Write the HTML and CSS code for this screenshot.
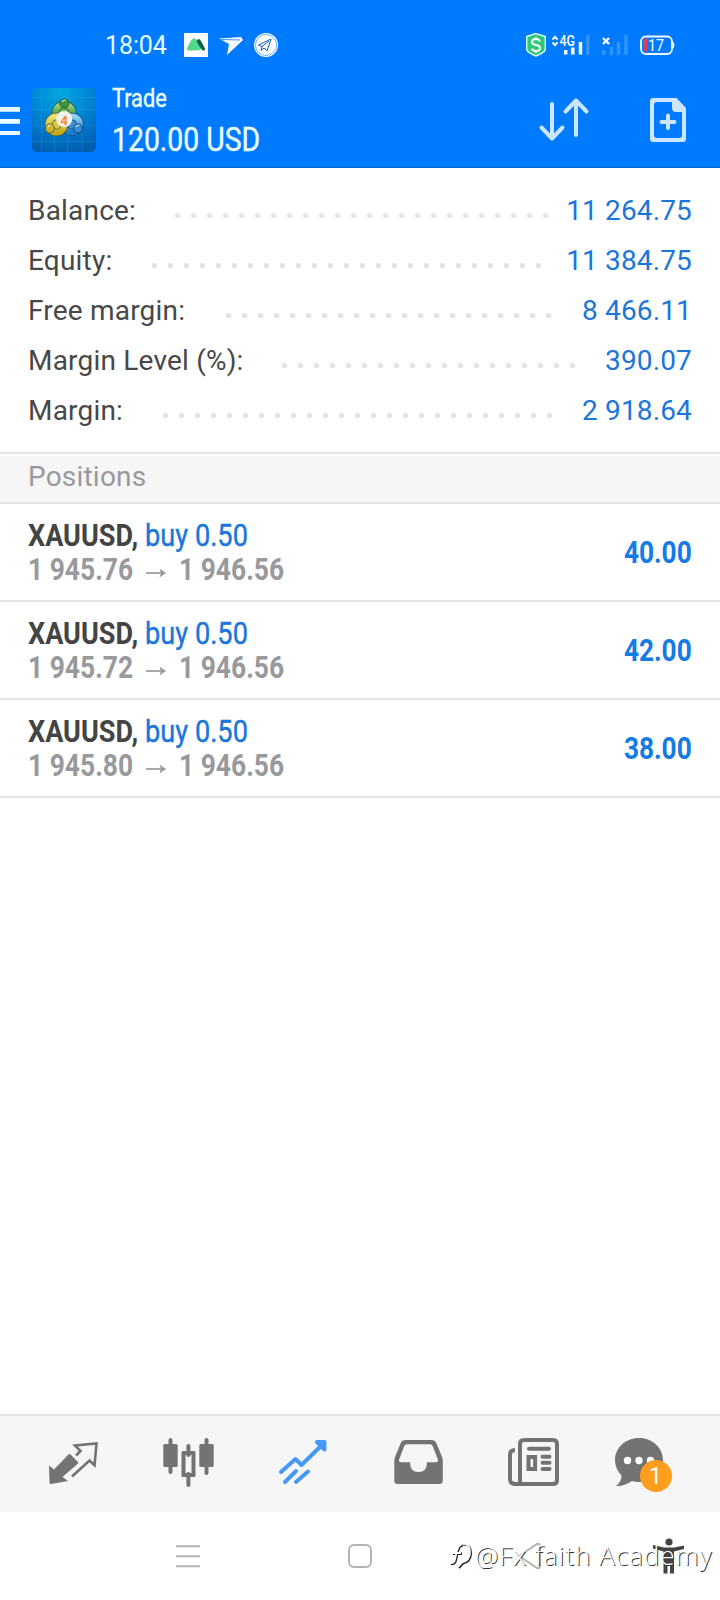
FILE: index.html
```html
<!DOCTYPE html>
<html lang="en">
<head>
<meta charset="utf-8">
<title>Trade</title>
<link rel="stylesheet" href="styles.css">
</head>
<body>
<div class="screen">
  <header class="top">
    <div class="status">
      <span class="clock">18:04</span>
      <svg class="status-apps" width="100" height="30" viewBox="180 30 100 30">
        <rect x="184" y="33" width="24" height="24" fill="#fff"/>
        <path d="M187 49q0-1.500 3.500-7.500t5.500-2l5 6v4q-2 1-7 1h-5q-2 0-2-1.500z" fill="#52d98b"/>
        <path d="M196.500 41q2-4 4.500 0l4 7.500q.5 2-2.500 2l-3-4z" fill="#12614d"/>
        <path d="M219 38.500l22-1.500 2 3-16 15 2-11z" fill="#fff"/>
        <path d="M221 39.500l19 .5" stroke="#007aff" stroke-width=".8"/>
        <circle cx="266" cy="45" r="12" fill="#fff"/>
        <circle cx="266" cy="45" r="10.500" fill="none" stroke="#007aff" stroke-width=".6"/>
        <path d="M271 39l-12.500 6 3.500 1.500-1 4 3-2.500 3 3zM262 46.500l7-5.500" fill="none" stroke="#1463b8" stroke-width="1" stroke-linejoin="round"/>
      </svg>
      <svg class="status-system" width="154" height="30" viewBox="522 30 154 30">
        <path d="M536 33.600l9.300 3v13.200q-1 3-9.300 6.200-8.300-3.200-9.300-6.200V36.600z" fill="#2fc877" stroke="#d9fff0" stroke-width="1.400"/>
        <path d="M540 41.500q-1-2.500-4-2.500-4 0-4 3 0 2.500 4 3t4 3q0 3-4 3-3.500 0-4-2.500M536 37v2M536 51v2" fill="none" stroke="#fff" stroke-width="2"/>
        <path d="M552.500 39.500l2.500-2.500 2.500 2.500M552.500 42.500l2.500 2.500 2.500-2.500" fill="none" stroke="#fff" stroke-width="2"/>
        <text x="559.500" y="46" class="net" textLength="15.500" lengthAdjust="spacingAndGlyphs">4G</text>
        <path d="M565.700 50v4.500M572.800 47.500v7M580.500 42v12.500" stroke="#fff" stroke-width="3.400"/>
        <path d="M587.800 35v20M603.700 50v5M611.500 47v8M618.500 42v13M626 35v20" stroke="#3296ff" stroke-width="3.400"/>
        <path d="M603 38l6 6M609 38l-6 6" stroke="#fff" stroke-width="2.400"/>
        <rect x="641" y="36.500" width="31" height="17.500" rx="5" fill="none" stroke="#f2fbff" stroke-width="1.800"/>
        <path d="M673 42q2 3 0 6z" fill="#fff" stroke="#fff"/>
        <path d="M647.500 38.500v13h-2q-2.500 0-2.500-3v-7q0-3 2.500-3z" fill="#e13c50"/>
        <text x="648" y="50.700" class="batt" textLength="16" lengthAdjust="spacingAndGlyphs">17</text>
      </svg>
    </div>
    <div class="bar">
      <svg class="menu" width="20" height="30" viewBox="0 105 20 30"><path d="M0 109.300h20M0 121.300h20M0 133.400h20" stroke="#eaffff" stroke-width="4.800"/></svg>
      <svg class="logo" width="64" height="64" viewBox="0 0 64 64">
        <defs>
          <radialGradient id="sky" cx=".45" cy=".05" r="1"><stop offset="0" stop-color="#00a6e2"/><stop offset=".5" stop-color="#0083d2"/><stop offset="1" stop-color="#005caf"/></radialGradient>
          <linearGradient id="gr" x2="0" y2="1"><stop offset="0" stop-color="#9fd07c"/><stop offset=".6" stop-color="#4d9d3a"/><stop offset="1" stop-color="#358335"/></linearGradient>
          <linearGradient id="ye" x2="0" y2="1"><stop offset="0" stop-color="#ece070"/><stop offset="1" stop-color="#c7a91d"/></linearGradient>
          <linearGradient id="bl" x2="0" y2="1"><stop offset="0" stop-color="#8fd0f5"/><stop offset="1" stop-color="#1b78c7"/></linearGradient>
        </defs>
        <rect width="64" height="64" rx="5" fill="url(#sky)"/>
        <path d="M9.500 0v64M22.500 0v64M35.500 0v64M50 0v64M0 9.500h64M0 21.500h64M0 38h64M0 53.500h64" stroke="#4cb7ed" stroke-opacity=".2" stroke-width="1"/>
        <circle cx="32" cy="25" r="8.500" fill="#6fb356" stroke="#245e3a" stroke-width="7.600"/>
        <circle cx="32" cy="25" r="8.500" fill="none" stroke="url(#gr)" stroke-width="6"/>
        <circle cx="40" cy="36.500" r="8" fill="#3b92d4" stroke="#0d4784" stroke-width="7.600"/>
        <circle cx="40" cy="36.500" r="8" fill="none" stroke="url(#bl)" stroke-width="6"/>
        <circle cx="24.500" cy="36.500" r="8" fill="#d9c840" stroke="#625d24" stroke-width="7.600"/>
        <circle cx="24.500" cy="36.500" r="8" fill="none" stroke="url(#ye)" stroke-width="6"/>
        <circle cx="32.300" cy="15.500" r="4.500" fill="#3f9438" stroke="#275f36"/>
        <circle cx="18" cy="40.500" r="4.500" fill="#cdb427" stroke="#665f22"/>
        <circle cx="46" cy="40.500" r="4.500" fill="#2f8dd3" stroke="#0d4784"/>
        <path d="M30 14q1.500-2.500 4-1.500M15.500 39q1.500-2.500 4-1.500M43.500 39q1.500-2.500 4-1.500" stroke="#fff" stroke-opacity=".6" stroke-width="1.500" fill="none"/>
        <circle cx="32.200" cy="31" r="8" fill="#f3f1eb"/>
        <text x="32" y="36.500" class="four">4</text>
      </svg>
      <div class="title">
        <span class="name">Trade</span>
        <span class="profit">120.00 USD</span>
      </div>
      <svg class="sort" width="52" height="46" viewBox="538 97 52 46"><path d="M552 104v34M541.500 127.500L552 138.500l10.500-11M576 135v-34M565.500 111.500L576 100.500l10.500 11" fill="none" stroke="#cce6ff" stroke-width="4" stroke-linecap="round" stroke-linejoin="round"/></svg>
      <svg class="add" width="38" height="46" viewBox="649 97 38 46"><path d="M653 98h23.500l9.500 10v31q0 3-3 3h-30q-3 0-3-3v-38q0-3 3-3zm4 4q-3 0-3 3v30q0 3 3 3h22q3 0 3-3v-23h-6q-4 0-4-4v-6z" fill="#cce6ff" fill-rule="evenodd"/><path d="M668 115.500v12.500M661.500 122h13" stroke="#cce6ff" stroke-width="4" stroke-linecap="round"/></svg>
    </div>
  </header>

  <section class="account">
    <div class="row balance"><span class="label">Balance:</span><i class="dots"></i><span class="value">11 264.75</span></div>
    <div class="row equity"><span class="label">Equity:</span><i class="dots"></i><span class="value">11 384.75</span></div>
    <div class="row free"><span class="label">Free margin:</span><i class="dots"></i><span class="value">8 466.11</span></div>
    <div class="row level"><span class="label">Margin Level (%):</span><i class="dots"></i><span class="value">390.07</span></div>
    <div class="row margin"><span class="label">Margin:</span><i class="dots"></i><span class="value">2 918.64</span></div>
  </section>

  <h2 class="section">Positions</h2>
  <main class="positions">
    <article class="position">
      <div class="info"><div class="line deal"><b class="symbol">XAUUSD,</b><span class="side">buy 0.50</span></div>
      <div class="line prices"><span class="price">1 945.76</span><svg class="arrow" width="20" height="12" viewBox="0 0 20 12"><path d="M0 6h18" stroke="#98999c" stroke-width="1.700"/><path d="M13.500 1.500L20 6l-6.500 4.500 1.500-4.500z" fill="#98999c"/></svg><span class="price">1 946.56</span></div></div>
      <span class="result">40.00</span>
    </article>
    <article class="position">
      <div class="info"><div class="line deal"><b class="symbol">XAUUSD,</b><span class="side">buy 0.50</span></div>
      <div class="line prices"><span class="price">1 945.72</span><svg class="arrow" width="20" height="12" viewBox="0 0 20 12"><path d="M0 6h18" stroke="#98999c" stroke-width="1.700"/><path d="M13.500 1.500L20 6l-6.500 4.500 1.500-4.500z" fill="#98999c"/></svg><span class="price">1 946.56</span></div></div>
      <span class="result">42.00</span>
    </article>
    <article class="position">
      <div class="info"><div class="line deal"><b class="symbol">XAUUSD,</b><span class="side">buy 0.50</span></div>
      <div class="line prices"><span class="price">1 945.80</span><svg class="arrow" width="20" height="12" viewBox="0 0 20 12"><path d="M0 6h18" stroke="#98999c" stroke-width="1.700"/><path d="M13.500 1.500L20 6l-6.500 4.500 1.500-4.500z" fill="#98999c"/></svg><span class="price">1 946.56</span></div></div>
      <span class="result">38.00</span>
    </article>
  </main>

  <nav class="tabs">
    <svg width="56" height="56" viewBox="45 1434 56 56"><path d="M49 1465.500l5 4 14.700-15.200q.8-.7 1.600 0l7.700 7.700q.8.800 0 1.600L62.500 1477l5.500 4-17 3q-1.500 0-1.500-1.500z" fill="#737373"/><path d="M76 1455.500l4.500-4.500-5.500-5.500 21.500-2-2 21.800-5-4.800-17.500 16" fill="none" stroke="#737373" stroke-width="2.600"/></svg>
    <svg width="56" height="56" viewBox="160 1434 56 56" fill="#737373"><path d="M170.500 1440v32M206.500 1440v33M188.400 1446v9M188.400 1474v11" stroke="#737373" stroke-width="4" stroke-linecap="round"/><rect x="163.300" y="1444" width="14.400" height="23" rx="1.500"/><rect x="199.300" y="1444" width="14.400" height="23" rx="1.500"/><path fill-rule="evenodd" d="M183 1451h11q1.500 0 1.500 1.500v23q0 1.500-1.500 1.500h-11q-1.500 0-1.500-1.500v-23q0-1.500 1.500-1.500zm2.500 4v18h6v-18z"/></svg>
    <svg width="56" height="56" viewBox="275 1434 56 56" fill="none" stroke="#4599f3" stroke-width="4" stroke-linecap="round" stroke-linejoin="round"><path d="M281 1472l14.500-13 6 6 22-21.500M285 1482l11-11M296 1482l12-10.500"/><path d="M317 1442h7.500v7.500z" fill="#4599f3"/></svg>
    <svg width="56" height="56" viewBox="390 1434 56 56"><path fill-rule="evenodd" d="M405 1440h27q3 0 4 2.500l5.500 13q1.300 3 1.300 6v19q0 3.500-3.500 3.500h-41.500q-3.500 0-3.500-3.500v-19q0-3 1.300-6l5.400-13q1-2.500 4-2.500zm2 4.200q-2 0-2.800 2l-5 13q-.8 3 1.800 3h9q0 9.800 8.500 9.800t8.500-9.800h9q2.600 0 1.800-3l-5-13q-.8-2-2.800-2z" fill="#737373"/></svg>
    <svg width="56" height="56" viewBox="505 1434 56 56" fill="none" stroke="#737373" stroke-width="4"><path d="M515 1450q-5 0-5 5v24q0 5 5 5h38q4 0 4-4v-36q0-4-4-4h-29q-4 0-4 4v40" /><path d="M529 1448.800h20M542.500 1456.700h7M542.500 1462.800h7M542.500 1469h7" stroke-linecap="round"/><rect x="528.500" y="1457" width="6.600" height="12"/></svg>
    <svg class="chat" width="60" height="60" viewBox="613 1434 60 60"><path d="M639 1438c13.500 0 24 9.800 24 22s-10.500 22-24 22q-4 0-7-1-8 5.500-16 5 5.500-4 5.500-10.500Q615 1469 615 1460c0-12.200 10.500-22 24-22z" fill="#737373"/><path d="M627.500 1460.500h.01M639 1460.500h.01M650.500 1460.500h.01" stroke="#fff" stroke-width="7.400" stroke-linecap="round"/><circle cx="656" cy="1476" r="16" fill="#ff9d1c"/><text x="655.500" y="1484" class="badge">1</text></svg>
  </nav>

  <footer class="system">
    <svg width="24" height="24" viewBox="0 0 24 24"><path d="M0 2.300h24M0 12.300h24M0 22.300h24" stroke="#b3b3b3" stroke-width="2"/></svg>
    <svg class="home" width="24" height="24" viewBox="0 0 24 24"><rect x="1" y="1" width="22" height="22" rx="5" fill="none" stroke="#b3b3b3" stroke-width="2"/></svg>
    <svg class="back" width="24" height="28" viewBox="0 0 24 28"><path d="M18 2q3-1 3 2v20q0 3-3 2L3 16q-3-2 0-4z" fill="none" stroke="#b3b3b3" stroke-width="2"/></svg>
    <svg class="access" width="32" height="36" viewBox="652 1538 32 36" fill="#444"><circle cx="669" cy="1542" r="3.600"/><path d="M653 1545l11 2.500h10l10-2v3.500l-10 2.500v22h-4v-10h-2.500v10h-4v-22l-10.500-3z"/></svg>
    <div class="watermark">
      <svg width="26" height="30" viewBox="448 1543 26 30" fill="none"><path d="M451 1567c5 1 5-3 6.500-11 1-5 3-7.500 6-8M453 1557h9M464 1547.500c5 0 7 4 7 9 0 6-4 9-8 10l-4 4.500M461 1556.500h1" stroke="#222" stroke-width="2"/><path d="M450 1566c5 1 5-3 6.500-11 1-5 3-7.500 6-8M452 1556h9M463 1546.500c5 0 7 4 7 9 0 6-4 9-8 10l-4 4.500" stroke="#fff" stroke-width="1.800"/></svg>
      <span class="handle">@Fx faith Academy</span>
    </div>
  </footer>
</div>
</body>
</html>
```
FILE: styles.css
```css
* { box-sizing: border-box; }
body { margin: 0; font-family: Roboto, "Liberation Sans", sans-serif; background: #fff; }
svg { display: block; flex: none; }
.screen { width: 720px; height: 1600px; display: flex; flex-direction: column; overflow: hidden; }

.top { height: 168px; background: #007aff; border-bottom: 1px solid #0b67c9; flex: none; }
.status { height: 80px; padding: 30px 44px 0 105px; display: flex; align-items: flex-start; }
.clock { width: 75px; font-size: 25px; line-height: 31px; color: #e6fbff; white-space: nowrap; letter-spacing: -.1px; }
.status-system { margin-left: auto; }
.net { font-size: 14px; font-weight: 500; fill: #fff; }
.batt { font-size: 16.500px; fill: #fff; }
.bar { height: 80px; display: flex; align-items: center; }
.logo { margin-left: 12px; }
.title { width: 427px; margin-left: 16px; padding-top: 2px; display: flex; flex-direction: column; align-items: flex-start; color: #eaffff; white-space: nowrap; }
.name { font-size: 26px; line-height: 36px; transform: scaleX(.835); transform-origin: 0 0; -webkit-text-stroke: .4px #eaffff; }
.profit { font-size: 34px; line-height: 46px; transform: scaleX(.835); transform-origin: 0 0; -webkit-text-stroke: .4px #eaffff; }
.four { font: bold 13.500px Roboto, sans-serif; fill: #f08a3c; text-anchor: middle; }
.sort { margin-left: -1px; }
.add { margin-left: 59px; }

.account { height: 286px; padding: 18px 28px 0; border-bottom: 2px solid #e4e4e4; flex: none; }
.row { height: 50px; display: flex; font-size: 28px; line-height: 50px; letter-spacing: .2px; white-space: nowrap; }
.label { color: #484848; flex: none; }
.value { margin-left: auto; color: #1a76da; letter-spacing: .15px; }
.dots { height: 50px; background: radial-gradient(circle at 8.500px 29.500px, #e3e3e3 2.200px, transparent 2.900px) 0 0 / 16px 50px repeat-x; }
.balance .label { width: 141px; } .balance .dots { width: 384px; }
.equity .label { width: 118px; } .equity .dots { width: 400px; }
.free .label { width: 192px; } .free .dots { width: 336px; }
.level .label { width: 248px; } .level .dots { width: 304px; }
.margin .label { width: 129px; } .margin .dots { width: 400px; }

.section { height: 50px; margin: 0; padding-left: 28px; border-top: 2px solid #fff; border-bottom: 2px solid #e4e4e4; background: #f6f6f6; color: #98999c; font-size: 28px; font-weight: 400; line-height: 41px; letter-spacing: .2px; flex: none; }

.positions { flex: 1; }
.position { height: 98px; padding: 0 28px; border-bottom: 2px solid #e4e4e4; display: flex; justify-content: space-between; }
.info { padding-top: 14px; }
.line { height: 34px; display: flex; font-size: 32px; line-height: 34px; white-space: nowrap; }
.symbol { width: 117px; color: #444; transform: scaleX(.845); transform-origin: 0 0; }
.side { color: #1a76da; transform: scaleX(.85); transform-origin: 0 0; -webkit-text-stroke: .4px #1a76da; }
.prices { color: #98999c; font-weight: 700; }
.price { width: 118px; transform: scaleX(.825); transform-origin: 0 0; }
.arrow { margin: 15px 13px 0 0; }
.result { color: #147ae4; font-size: 32px; font-weight: 700; line-height: 96px; transform: scaleX(.82); transform-origin: 100% 0; }

.tabs { height: 98px; padding: 18px 0 0 45px; background: #f6f6f6; border-top: 2px solid #e4e4e4; display: grid; grid-template-columns: repeat(6, 115px); flex: none; }
.chat { margin-left: -7px; }
.badge { font-size: 23px; fill: #fff; text-anchor: middle; }

.system { position: relative; height: 88px; padding-left: 176px; display: flex; align-items: center; flex: none; }
.home { margin-left: 148px; }
.back { margin-left: 147px; }
.access { margin-left: 109px; }
.watermark { position: absolute; left: 448px; top: 26px; display: flex; align-items: center; }
.handle { margin-left: 1px; font-family: "Open Sans", sans-serif; font-weight: 300; font-size: 26px; line-height: 34px; letter-spacing: 1px; color: #fff; text-shadow: 1px 1px 0 #333; white-space: nowrap; }
```
